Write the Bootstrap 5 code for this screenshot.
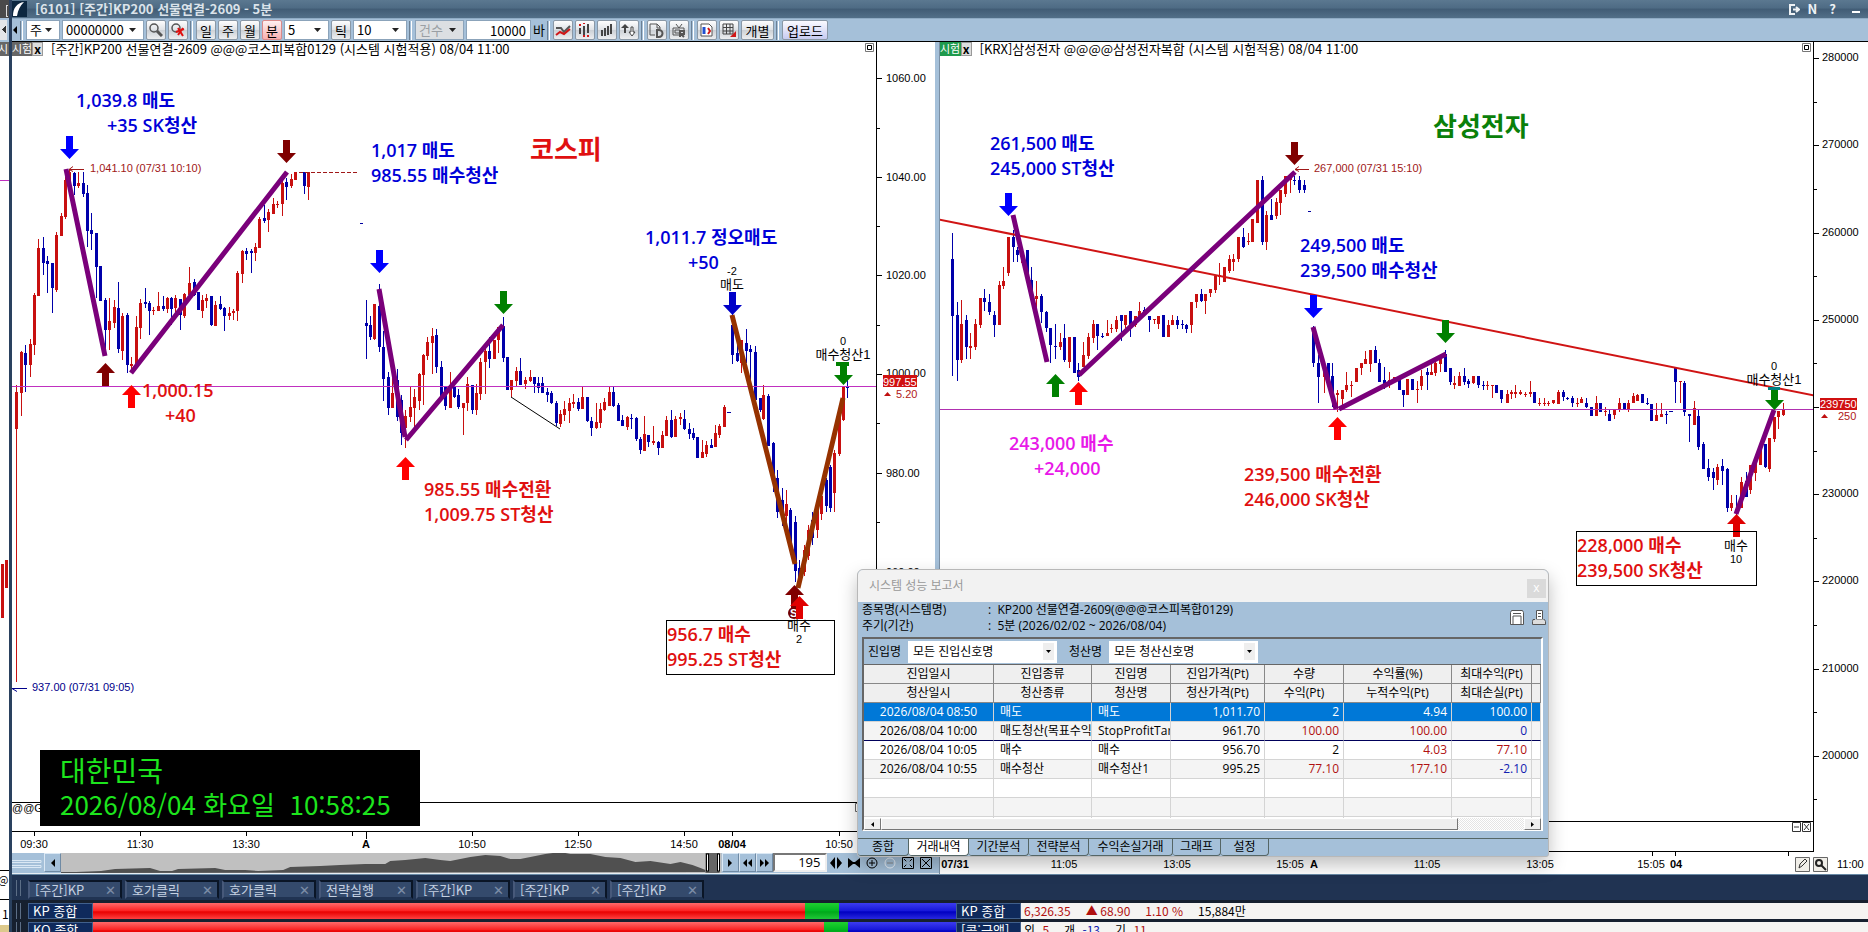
<!DOCTYPE html>
<html lang="ko">
<head>
<meta charset="utf-8">
<meta name="viewport" content="width=device-width, initial-scale=1">
<title>[6101] [주간]KP200 선물연결-2609 - 5분</title>
<link href="https://cdn.jsdelivr.net/npm/bootstrap@5.3.0/dist/css/bootstrap.min.css" rel="stylesheet">
<style>
:root{--pane:#a5c0d9;--ui:"Noto Sans CJK KR",sans-serif;--doc:"Open Sans","Noto Sans CJK KR",sans-serif}
body{font-family:var(--ui);font-size:13px;line-height:16px;color:#000;background:#fff}
button,input,select{font:inherit;color:inherit}
svg{display:block}
.strip{width:12px;border-right:3px solid #2a415f}
.titlebar{height:18px;background:linear-gradient(#5b7890,#4e6b84 45%,#415c75 50%,#526f88)}
.titlebar h1{font-size:13px;line-height:16px;font-weight:700;color:#dbe3ea}
.titlebar button{background:none;border:0;color:#eef2f5;font-weight:700}
.tools{height:24px;background:var(--pane);border-top:1px solid #8fabc4;border-bottom:1px solid #000;gap:2px}
.tools label{line-height:20px}
.rule{width:3px;height:19px;border-left:1px solid #6c8094;border-right:1px solid #fff;margin-right:1px}
.key{height:20px;width:20px;padding:0;border:1px solid #8a98a6;border-radius:2px;background:linear-gradient(#fdfdfd,#dfe2e6 50%,#cdd1d6 52%,#eceef0);line-height:17px;display:inline-flex;align-items:center;justify-content:center}
.key.hot{background:linear-gradient(#fff0f0,#f7b0b0);border-color:#d98a8a}
.key.wider{width:33px}
.key.send{width:46px;background:linear-gradient(#fafaff,#c7cbf0)}
.combo{height:20px;border:1px solid #8ba3ba;border-radius:0;padding:0 16px 0 3px;appearance:none;line-height:18px;background:#fff url("data:image/svg+xml,%3Csvg xmlns='http://www.w3.org/2000/svg' width='7' height='4'%3E%3Cpath d='M0 0h7L3.500 4z' fill='%23222'/%3E%3C/svg%3E") no-repeat right 7px center}
.combo:disabled{background-color:#dcdfe2;color:#9a9fa4;opacity:1}
.pane{min-width:0}
.pane+.pane{border-left:1px solid #7c90a4}
.pricecol{width:59px}
.pricecol.wide{width:55px}
.draw{position:absolute;inset:0;width:100%;height:100%;font-family:"Liberation Sans","Noto Sans CJK KR",sans-serif;font-size:11px}
.ko{font-size:13px}
.head{height:16px;line-height:14px}
.tag{height:14px;line-height:13px;color:#fff;background:#666;font-size:11px;padding:0;width:20px;white-space:nowrap;display:flex;justify-content:center}
.tag.go{background:#1f9a4d;width:21px}
.shut{width:11px;height:14px;padding:0;border:1px solid #999;background:#ddd;line-height:10px;font-weight:700;font-size:12px}
.note{font-family:var(--doc);font-size:18px;font-weight:600}
.name{font-family:var(--doc);font-size:26px;font-weight:700}
.slide{height:21px;background:var(--pane);border-bottom:1px solid #e8eef4}
.slide button{width:17px;height:19px;padding:0;border:1px solid;border-color:#dbe8f4 #6f8aa4 #6f8aa4 #dbe8f4;background:var(--pane);display:flex;align-items:center;justify-content:center}
.slide .bare{border:0;width:18px}
.slide input{width:54px;height:19px;border:2px solid;border-color:#777 #eee #eee #777;font-family:var(--doc);text-align:right;padding:0 4px 2px 0}
.clock{left:40px;top:750px;width:380px;height:76px;background:#000;color:#1de51d;line-height:33px;padding:4px 0 0 20px;white-space:pre}
.clock .big{font-size:28px}.clock .time{font-size:26px}
.foot{height:58px;background:#16202f}
.tabs{height:26px;background:#203352;border-top:1px solid #6889a5;padding:5px 0 0 4px;gap:3px}
.tabs button{width:94px;height:19px;border:2px solid;border-color:#0a1526 #0a1526 #203352 #47597a;background:#344a6c;color:#c5d1e2;padding:0 4px 0 5px;line-height:15px}
.tabs .grip{margin-right:4px}
.grip{width:5px;height:16px;border:1px solid #5c6e86;border-width:0 1px;margin-right:7px}
.tick{height:16px;margin:3px 0 3px 4px}
.tick .cap{width:65px;background:#0f2a5c;border:1px solid #41608c;color:#fff;line-height:14px;padding-left:4px}
.red{background:linear-gradient(#ff6a6a,#fb2020 50%,#e80000 55%,#ff4040)}
.grn{background:linear-gradient(#20d030,#00b820 50%,#00a81a 55%,#20c838)}
.blu{background:linear-gradient(#3c3cf0,#1616d8 50%,#0000c0 55%,#2828e0)}
.vals{background:#f5f4f2;line-height:15px;padding-left:3px;font-size:12px;gap:15px}
.rise{color:#b01010}.fall{color:#1020b0}
.report{left:857px;top:569px;width:692px;height:288px;background:var(--pane);border:1px solid #b8b8b8;border-radius:6px 6px 3px 3px;box-shadow:0 8px 18px rgba(0,0,0,.25);font-family:var(--doc);font-size:12px;overflow:hidden}
.report .bar{height:32px;background:#f2f2f2;color:#999;padding:0 2px 0 11px}
.report .bar button{width:19px;height:19px;border:0;background:#dadada;color:#fff;line-height:14px;padding:0;margin-top:4px}
.info dt{width:126px;font-weight:400}.info dd,.info dt{margin:0;line-height:16px}
.info{padding:0 2px 3px 4px}
.panel{margin:0 5px 0 4px;border:2px solid;border-color:#666 #fff #fff #666;height:194px}
.filter{height:25px;padding-left:4px}
.filter .combo{width:149px;border-color:#fff;height:22px;padding-left:4px;background-image:url("data:image/svg+xml,%3Csvg xmlns='http://www.w3.org/2000/svg' width='11' height='17'%3E%3Cpath fill='%23eee' d='M0 0h11v17H0z'/%3E%3Cpath d='M3 7h5L5.500 10z'/%3E%3C/svg%3E");background-position:right 2px center}
.filter label{width:40px}
.deals{table-layout:fixed;width:100%;margin:0;border-collapse:separate;border-spacing:0}
.deals th,.deals td{height:19px;line-height:18px;padding:0 4px 0 6px;border:0 solid #d4d4d4;border-width:0 1px 1px 0;overflow:hidden;white-space:nowrap}
.deals th{background:#efefef;font-weight:400;text-align:center;border-color:#888;padding:0}
.deals td:nth-child(n+4){text-align:right}
.deals td:first-child{text-align:center;padding:0}
.deals .sel td{background:#0078d7;color:#fff}
.deals .alt td{background:#f4f4f4}
.deals .cut td{border-bottom-color:#00005a}
.grid{height:154px;border-top:1px solid #666;background:#fff}
.hbar{height:12px;background:repeating-conic-gradient(#fff 0 25%,#e4e4e4 0 50%) 0 0/2px 2px}
.hbar button,.hbar i{background:#efefef;border:1px solid;border-color:#fff #777 #777 #fff;padding:0;height:12px;display:flex;align-items:center;justify-content:center}
.hbar button{width:17px}
.sheets{margin-top:7px;border-top:1px solid #566}
.sheets button{height:17px;border:1px solid #566;border-width:0 1px 1px 0;border-radius:0 0 4px 3px;background:var(--pane);padding:0;line-height:14px}
.sheets .on{background:#fff}
</style>
</head>
<body class="vh-100 overflow-hidden">
<div class="d-flex h-100 position-relative">

<aside class="strip h-100 flex-shrink-0 overflow-hidden position-relative">
 <svg width="9" height="932" shape-rendering="crispEdges">
  <rect width="9" height="18" fill="#4a4a4a"/><path d="M8 5H6v11h2" stroke="#ddd" fill="none"/>
  <rect y="18" width="9" height="24" fill="#a5c0d9"/><rect y="20" width="7" height="20" fill="#e4e6e8"/><path d="M6 26v7L2 29.500z" fill="#333"/>
  <rect y="42" width="9" height="14" fill="#666"/><text y="53" x="-2" fill="#fff" font-size="11">시</text>
  <path d="M0 180.500h9" stroke="#c030c0"/><path d="M0 870.500h9M0 899.500h9" stroke="#000"/>
  <rect y="564" x="1" width="3" height="54" fill="#c81010"/><rect y="560" x="5" width="3" height="28" fill="#c81010"/>
  <text x="-2" y="884" font-size="11">@</text><text x="2" y="919" font-size="12">1</text><rect y="925" width="9" height="7" fill="#dcc98c"/>
 </svg>
</aside>

<main class="flex-grow-1 d-flex flex-column h-100" style="min-width:0">
 <header class="titlebar d-flex align-items-center flex-shrink-0">
  <svg width="15" height="16"><rect width="15" height="16" fill="#0c2740"/><path d="M1 15C1 7 5 2 12 1 8 5 6 9 5 15z" fill="#fff"/></svg>
  <h1 class="m-0 ms-2 flex-grow-1">[6101] [주간]KP200 선물연결-2609 - 5분</h1>
  <button class="p-0 me-2" aria-label="내보내기"><svg width="11" height="11" fill="none" stroke="#eef2f5" stroke-width="2"><path d="M6 1H1v9h5M4 5.500h5M7 3l3 2.500L7 8"/></svg></button>
  <button class="p-0 me-2">N</button><button class="p-0 ms-1 me-3">?</button>
  <button class="p-0 me-2" aria-label="최소화"><svg width="8" height="10"><path d="M0 8h8" stroke="#fff" stroke-width="2"/></svg></button>
 </header>

 <div class="tools d-flex align-items-center flex-shrink-0">
  <svg width="6" height="9"><path d="M5 0v8L1 4z"/></svg><span class="rule"></span>
  <select class="combo" aria-label="종류" style="width:34px"><option>주</option></select>
  <select class="combo" aria-label="종목코드" style="width:82px"><option>00000000</option></select>
  <button class="key" aria-label="검색"><svg width="14" height="14" fill="none" stroke="#555"><circle cx="5" cy="5" r="4" stroke-width="1.500"/><path d="M8 8l5 5" stroke-width="3"/></svg></button>
  <button class="key" aria-label="검색 해제"><svg width="14" height="14" fill="none" stroke="#555"><circle cx="5" cy="5" r="4" stroke-width="1.500"/><path d="M5 9l8-3M7 5l5 8M12 5l-5 7" stroke="#e01010" stroke-width="2"/></svg></button>
  <span class="rule"></span>
  <button class="key">일</button><button class="key">주</button><button class="key">월</button><button class="key hot">분</button>
  <select class="combo" aria-label="분" style="width:45px"><option>5</option></select>
  <button class="key">틱</button>
  <select class="combo" aria-label="틱" style="width:54px"><option>10</option></select>
  <span class="rule"></span>
  <select class="combo" aria-label="건수" disabled style="width:49px"><option>건수</option></select>
  <input id="bars" class="combo text-end px-1" style="background:#fff;width:65px" value="10000"><label for="bars">바</label>
  <span class="rule"></span>
  <button class="key" aria-label="추세선"><svg width="16" height="14" fill="none" stroke-width="2"><path d="M1 5h5l3 4 6-6" stroke="#555"/><path d="M1 12l4-3 4 2 6-5" stroke="#d01818"/></svg></button>
  <button class="key" aria-label="봉차트"><svg width="13" height="14"><path d="M2 5v6M6 3v9M10 1v9" stroke="#444" stroke-width="2"/><path d="M1 2h2M5 0h2M5 13h2M9 13h2" stroke="#d01818" stroke-width="2"/></svg></button>
  <button class="key" aria-label="막대"><svg width="13" height="14"><path d="M2 7v6M5 5v8M8 3v9M11 1v10" stroke="#444" stroke-width="2"/></svg></button>
  <button class="key" aria-label="정렬"><svg width="15" height="14"><path d="M4 1l4 4H5v5H3V5H0z" fill="#444"/><path d="M10 4h2v5h2l-3 4-3-4h2z" fill="#fff" stroke="#444"/></svg></button>
  <span class="rule"></span>
  <button class="key" aria-label="문서"><svg width="15" height="15" fill="none" stroke="#555"><path d="M6 12H1V1h7l3 3v2M8 1v4h3"/><path d="M8 7v7h2a3 3 0 0 0 0-7z" stroke-width="2"/></svg></button>
  <button class="key" aria-label="방송"><svg width="14" height="15" fill="none" stroke="#555"><path d="M7 12H1V5h11v2M4 1l3 4 3-4M3 7h5v3H3z"/><path d="M8 14V8h4v3H9l3 3" stroke-width="2"/></svg></button>
  <span class="rule"></span>
  <button class="key" aria-label="차트 저장"><svg width="13" height="14" fill="none" stroke="#555"><path d="M1 1h8l3 3v9H1z" fill="#fff"/><path d="M4 4v7" stroke="#2050d0" stroke-width="3"/><path d="M8 5l2 3-2 3" stroke="#d01818" stroke-width="2"/></svg></button>
  <button class="key" aria-label="표"><svg width="14" height="14"><path d="M1 1h10v10H1zM1 4.500h10M1 8h10M4.500 1v10M8 1v10" fill="none" stroke="#444"/><path d="M14 8v6H8z" fill="#d01818"/></svg></button>
  <button class="key wider">개별</button><span class="rule"></span><button class="key send">업로드</button>
 </div>

 <div class="flex-grow-1 d-flex" style="min-height:0">
  <section class="pane d-flex flex-column" style="flex:927 1 0">
   <div class="flex-grow-1 d-flex">
    <div class="flex-grow-1 position-relative overflow-hidden">
     <svg class="draw"><g transform="translate(-12 -42)">
      <g data-bars="kospi" shape-rendering="crispEdges"></g>
      <path d="M12 386.500h864" stroke="#c030c0"/>
      <path d="M511 397l49 32" stroke="#000"/><path d="M299 172.500h60" stroke="#a01818" stroke-dasharray="4 2"/><path d="M360 223.500h3M727 412.500h4" stroke="#0000a0"/>
      <g stroke="#7a007a" stroke-width="5"><path d="M66 169l39 187M131 373L287 172M379 289l26 148M406 440l97-115"/></g>
      <path d="M732 315l63 249M798 588l45-190" stroke="#963200" stroke-width="5" fill="none"/>
      <path d="M84 169.500H69l4-3m-4 3l4 2" stroke="#a01818" fill="none"/><path d="M27 688.500H12l5 3" stroke="#00008b" fill="none"/>
      <circle cx="794" cy="613" r="6" fill="#700000"/><text x="790" y="617" fill="#fff" font-weight="700">S</text>
      <g data-marks="kospi"></g>
      <use href="#ua" x="799" y="596" fill="#e00000"/><path d="M836 362h13v4h-13z" fill="#008000"/>
      <rect x="666.500" y="620.500" width="168" height="54" fill="none" stroke="#000"/>
      <path d="M12 802.500h864M12 831.500h864M34.500 832v4M140.500 832v4M246.500 832v4M352.500 832v4M366.500 832v7M472.500 832v4M578.500 832v4M684.500 832v4M732.500 832v4M839.500 832v4" stroke="#000"/>
      <g class="note" fill="#0000d8">
       <text x="76" y="107">1,039.8 매도</text><text x="107" y="132">+35 SK청산</text>
       <text x="371" y="157">1,017 매도</text><text x="371" y="182">985.55 매수청산</text>
       <text x="645" y="244">1,011.7 정오매도</text><text x="688" y="269">+50</text></g>
      <g class="note" fill="#e01010">
       <text x="142" y="397">1,000.15</text><text x="165" y="422">+40</text>
       <text x="424" y="496">985.55 매수전환</text><text x="424" y="521">1,009.75 ST청산</text>
       <text x="667" y="641">956.7 매수</text><text x="667" y="666">995.25 ST청산</text></g>
      <text class="name" x="530" y="159" fill="#e01010">코스피</text>
      <text x="90" y="172" fill="#a01818">1,041.10 (07/31 10:10)</text>
      <text x="32" y="691" fill="#00008b">937.00 (07/31 09:05)</text>
      <g text-anchor="middle"><text x="732" y="275">-2</text><text x="843" y="345">0</text><text x="799" y="643">2</text>
       <g class="ko"><text x="732" y="289">매도</text><text x="843" y="359">매수청산1</text><text x="799" y="630">매수</text></g>
       <text x="34" y="848">09:30</text><text x="140" y="848">11:30</text><text x="246" y="848">13:30</text><text x="472" y="848">10:50</text><text x="578" y="848">12:50</text><text x="684" y="848">14:50</text><text x="839" y="848">10:50</text>
       <g font-weight="700"><text x="366" y="848">A</text><text x="732" y="848">08/04</text></g></g>
      <text x="12" y="812">@@G</text><path d="M855.500 803.500h8v8h-8z" fill="none" stroke="#666"/>
      <path d="M865.500 43.500h8v8h-8z" fill="none" stroke="#777"/><path d="M867.500 45.500h4v4h-4z" fill="none" stroke="#000"/>
     </g></svg>
     <div class="head d-flex position-relative"><span class="tag">시험</span><button class="shut">x</button><span class="ms-1 ps-1">[주간]KP200 선물연결-2609 @@@코스피복합0129 (시스템 시험적용) 08/04 11:00</span></div>
    </div>
    <div class="pricecol flex-shrink-0 position-relative"><svg class="draw"><g transform="translate(-876 -42)">
      <path d="M876.500 42v790M877 78.500h5M877 128.500h3M877 177.500h5M877 226.500h3M877 275.500h5M877 325.500h3M877 374.500h5M877 423.500h3M877 473.500h5M877 522.500h3M877 572.500h5" stroke="#000"/>
      <text x="886" y="82">1060.00</text><text x="886" y="181">1040.00</text><text x="886" y="279">1020.00</text><text x="886" y="377">1000.00</text><text x="886" y="477">980.00</text><text x="886" y="576">960.00</text>
      <rect x="883" y="375" width="34" height="12" fill="#d01010"/><text x="883" y="386" fill="#fff">997.55</text><path d="M884 396h7l-3.500-4z" fill="#c01010"/><text x="896" y="398" fill="#b01818">5.20</text>
     </g></svg></div>
    <div style="width:4px;background:var(--pane)" class="flex-shrink-0"></div>
   </div>
   <div class="slide d-flex flex-shrink-0">
    <svg width="32" height="20"><path d="M0 7.500h29v2H0M0 12.500h29v2H0" fill="none" stroke="#dbe8f4"/></svg>
    <button aria-label="이전"><svg width="5" height="8"><path d="M5 0v8L1 4z"/></svg></button>
    <svg class="flex-grow-1" height="20" width="10" viewBox="61 853 660 20" preserveAspectRatio="none" style="min-width:0"><path fill="#c0c0c0" d="M61 853h660v20H61z"/><path fill="#505050" d="M61 873v-1h15l25-1 14-2 35-1 10 3h12l6-2 37-1 10 2h20l13 1 25-1 7-3 30-1 20-1 25-1h20l5-3 15-1 10-1 10-1 15 2 10 1 20-4 15-2 15 1 10 3h10l15-3 10-2 15-2 10 2h20l15 3 15 1 15 4 15-1 20 3 10-2 12 3 8 3 5 2v2z"/><path fill="#666" d="M705 853h14v20h-14z"/><path d="M706 854h2v17h-2zM717 854h2v17h-2z" fill="#fff" stroke="#000"/></svg>
    <button aria-label="다음"><svg width="5" height="8"><path d="M0 0v8l4-4z"/></svg></button>
    <button aria-label="빠르게 뒤로"><svg width="9" height="8"><path d="M4 0v8L0 4zM9 0v8L5 4z"/></svg></button>
    <button aria-label="빠르게 앞으로"><svg width="9" height="8"><path d="M0 0v8l4-4zM5 0v8l4-4z"/></svg></button>
    <input aria-label="봉 개수" value="195">
    <button class="bare" aria-label="넓게"><svg width="12" height="12"><path d="M5 0v12L0 6zM7 0v12l5-6z"/></svg></button>
    <button class="bare" aria-label="좁게"><svg width="12" height="12"><path d="M0 1v10l5-4V5zM12 1v10L7 7V5zM5 5h2v2H5z"/></svg></button>
    <button class="bare" aria-label="확대"><svg width="12" height="12" fill="none" stroke="#000"><circle cx="6" cy="6" r="5"/><path d="M3 6h6M6 3v6"/></svg></button>
    <button class="bare" aria-label="축소"><svg width="12" height="12" fill="none" stroke="#e8f0f8"><circle cx="6" cy="6" r="5"/><path d="M3 6h6" stroke="#888"/></svg></button>
    <button class="bare" aria-label="전체"><svg width="12" height="12" fill="none" stroke="#000"><path d="M.5.5h11v11H.5zM2 2l8 8M10 2l-8 8"/><path d="M4 6h4M6 4v4" stroke="#a5c0d9" stroke-width="3"/></svg></button>
    <button class="bare" aria-label="닫기"><svg width="12" height="12" fill="none" stroke="#000"><path d="M.5.5h11v11H.5zM2 2l8 8M10 2l-8 8"/></svg></button>
    <span style="width:4px"></span>
   </div>
  </section>

  <section class="pane d-flex" style="flex:929 1 0">
   <div class="flex-grow-1 position-relative overflow-hidden">
    <svg class="draw"><g transform="translate(-940 -42)">
     <g data-bars="samsung" shape-rendering="crispEdges"></g>
     <path d="M939 409.500h875" stroke="#b030b0"/><path d="M939 219.500l875 176" stroke="#d01414" stroke-width="2"/><path d="M1308 211.500h3M1669 411.500h4" stroke="#0000a0"/>
     <path d="M1013 215l34 147M1079 375l216-203M1313 327l23 82M1339 409l107-55M1736 514l38-104" stroke="#7a007a" stroke-width="5"/>
     <path d="M1309 169.500h-14l4-3m-4 3l4 2" stroke="#a01818" fill="none"/>
     <g data-marks="samsung"></g><path d="M1768 387h12v3h-12z" fill="#008080"/>
     <rect x="1576.500" y="531.500" width="180" height="54" fill="none" stroke="#000"/>
     <path d="M939 821.500h875M939 851.500h875M1652.500 852v4M1675.500 852v4M1788.500 852v4" stroke="#000"/>
     <path d="M1792.500 822.500h8v9h-8zM1802.500 822.500h8v9h-8zM1794 827h5M1804 824l5 6M1809 824l-5 6" fill="none" stroke="#333"/>
     <g class="note" fill="#0000d8"><text x="990" y="150">261,500 매도</text><text x="990" y="175">245,000 ST청산</text><text x="1300" y="252">249,500 매도</text><text x="1300" y="277">239,500 매수청산</text></g>
     <g class="note" fill="#e818e8"><text x="1009" y="450">243,000 매수</text><text x="1034" y="475">+24,000</text></g>
     <g class="note" fill="#e01010"><text x="1244" y="481">239,500 매수전환</text><text x="1244" y="506">246,000 SK청산</text><text x="1577" y="552">228,000 매수</text><text x="1577" y="577">239,500 SK청산</text></g>
     <text class="name" x="1433" y="136" fill="#0a800a">삼성전자</text>
     <text x="1314" y="172" fill="#a01818">267,000 (07/31 15:10)</text>
     <g text-anchor="middle"><text x="1774" y="370">0</text><text x="1736" y="563">10</text><g class="ko"><text x="1774" y="384">매수청산1</text><text x="1736" y="550">매수</text></g>
      <text x="1064" y="868">11:05</text><text x="1177" y="868">13:05</text><text x="1290" y="868">15:05</text><text x="1427" y="868">11:05</text><text x="1540" y="868">13:05</text><text x="1651" y="868">15:05</text>
      <g font-weight="700"><text x="955" y="868">07/31</text><text x="1314" y="868">A</text><text x="1676" y="868">04</text></g></g>
     <path d="M1802.500 43.500h8v8h-8z" fill="none" stroke="#777"/><path d="M1804.500 45.500h4v4h-4z" fill="none" stroke="#000"/>
     <path d="M1795.500 857.500h14v14h-14z" fill="#f0eee8" stroke="#666"/><path d="M1799 868l1-4 5-5 2 2-5 5z" fill="none" stroke="#333"/>
    </g></svg>
    <div class="head d-flex position-relative"><span class="tag go">시험</span><button class="shut">x</button><span class="ms-1 ps-1">[KRX]삼성전자 @@@@삼성전자복합 (시스템 시험적용) 08/04 11:00</span></div>
   </div>
   <div class="pricecol wide flex-shrink-0 position-relative"><svg class="draw"><g transform="translate(-1813 -42)">
     <path d="M1813.500 42v810M1814 58.500h5M1814 102.500h3M1814 145.500h5M1814 189.500h3M1814 233.500h5M1814 276.500h3M1814 320.500h5M1814 363.500h3M1814 407.500h5M1814 451.500h3M1814 494.500h5M1814 538.500h3M1814 581.500h5M1814 625.500h3M1814 669.500h5M1814 712.500h3M1814 756.500h5M1814 799.500h3" stroke="#000"/>
     <text x="1822" y="61">280000</text><text x="1822" y="148">270000</text><text x="1822" y="236">260000</text><text x="1822" y="323">250000</text><text x="1822" y="497">230000</text><text x="1822" y="584">220000</text><text x="1822" y="672">210000</text><text x="1822" y="759">200000</text>
     <rect x="1820" y="398" width="37" height="12" fill="#d01010"/><text x="1820" y="408" fill="#fff">239750</text><path d="M1821 418h7l-3.500-4z" fill="#c01010"/><text x="1838" y="420" fill="#b01818">250</text>
     <path d="M1813.500 857.500h14v14h-14z" fill="#f0eee8" stroke="#666"/><circle cx="1819" cy="863" r="3" fill="none" stroke="#222" stroke-width="2"/><path d="M1821 865l5 5" stroke="#222" stroke-width="2"/><text x="1837" y="868">11:00</text>
    </g></svg></div>
  </section>
 </div>

 <footer class="foot flex-shrink-0 overflow-hidden">
  <nav class="tabs d-flex" id="tabs"><span class="grip"></span></nav>
  <div class="tick d-flex"><span class="grip"></span><span class="cap">KP 종합</span>
   <div class="d-flex" style="flex:864 1 0"><span class="red" style="flex:713"></span><span class="grn" style="flex:34"></span><span class="blu" style="flex:117"></span></div>
   <span class="cap">KP 종합</span><div class="vals rise d-flex" style="flex:845 1 0"><span>6,326.35</span><span>▲ 68.90</span><span>1.10 %</span><span class="text-black">15,884만</span></div></div>
  <div class="tick d-flex"><span class="grip"></span><span class="cap">KQ 종합</span>
   <div class="d-flex" style="flex:864 1 0"><span class="red" style="flex:732"></span><span class="grn" style="flex:24"></span><span class="blu" style="flex:108"></span></div>
   <span class="cap">[콜:금액]</span><div class="vals d-flex" style="flex:845 1 0"><span>외 <b class="rise fw-normal ps-1">5</b></span><span>개 <b class="fall fw-normal ps-1">-13</b></span><span>기 <b class="rise fw-normal ps-1">11</b></span></div></div>
 </footer>
</main>

<div class="clock position-absolute"><div class="big">대한민국</div><div class="time">2026/08/04 화요일  10:58:25</div></div>

<section class="report position-absolute">
 <div class="bar d-flex justify-content-between align-items-center"><span>시스템 성능 보고서</span><button aria-label="보고서 닫기">x</button></div>
 <div class="info d-flex justify-content-between">
  <dl class="m-0"><div class="d-flex"><dt>종목명(시스템명)</dt><dd>:&nbsp; KP200 선물연결-2609(@@@코스피복합0129)</dd></div><div class="d-flex"><dt>주기(기간)</dt><dd>:&nbsp; 5분 (2026/02/02 ~ 2026/08/04)</dd></div></dl>
  <div class="d-flex gap-2 pt-2"><svg width="14" height="15"><path d="M1.500.5h11l1 2v12h-13v-12z" fill="#fff" stroke="#555"/><path d="M3 3.500h8M3 14V6h8v8" stroke="#555" fill="none"/></svg><svg width="14" height="15"><path d="M4.500.5h6v9h-6z" fill="#fff" stroke="#555"/><path d="M6 3.500h3M6 6.500h3" stroke="#555"/><path d="M3 9.500H1l-.5 2v3h13v-3l-1-2h-1" fill="#ddd" stroke="#555"/></svg></div>
 </div>
 <div class="panel">
  <div class="filter d-flex align-items-center"><label for="inSig">진입명</label><select id="inSig" class="combo"><option>모든 진입신호명</option></select><label for="outSig" class="ms-2 ps-1 me-1">청산명</label><select id="outSig" class="combo"><option>모든 청산신호명</option></select></div>
  <div class="grid overflow-hidden">
   <table class="deals"><colgroup><col style="width:130px"><col style="width:98px"><col style="width:79px"><col style="width:94px"><col style="width:79px"><col style="width:108px"><col style="width:80px"><col></colgroup>
    <thead><tr><th>진입일시</th><th>진입종류</th><th>진입명</th><th>진입가격(Pt)</th><th>수량</th><th>수익률(%)</th><th>최대수익(Pt)</th><th></th></tr><tr><th>청산일시</th><th>청산종류</th><th>청산명</th><th>청산가격(Pt)</th><th>수익(Pt)</th><th>누적수익(Pt)</th><th>최대손실(Pt)</th><th></th></tr></thead>
    <tbody>
     <tr class="sel"><td>2026/08/04 08:50</td><td>매도</td><td>매도</td><td>1,011.70</td><td>2</td><td>4.94</td><td>100.00</td><td></td></tr>
     <tr class="alt cut"><td>2026/08/04 10:00</td><td>매도청산(목표수익)</td><td>StopProfitTarget</td><td>961.70</td><td class="rise">100.00</td><td class="rise">100.00</td><td class="fall">0</td><td></td></tr>
     <tr><td>2026/08/04 10:05</td><td>매수</td><td>매수</td><td>956.70</td><td>2</td><td class="rise">4.03</td><td class="rise">77.10</td><td></td></tr>
     <tr class="alt"><td>2026/08/04 10:55</td><td>매수청산</td><td>매수청산1</td><td>995.25</td><td class="rise">77.10</td><td class="rise">177.10</td><td class="fall">-2.10</td><td></td></tr>
     <tr><td></td><td></td><td></td><td></td><td></td><td></td><td></td><td></td></tr><tr class="alt"><td></td><td></td><td></td><td></td><td></td><td></td><td></td><td></td></tr><tr><td></td><td></td><td></td><td></td><td></td><td></td><td></td><td></td></tr>
    </tbody></table>
  </div>
  <div class="hbar d-flex"><button aria-label="왼쪽으로"><svg width="4" height="5"><path d="M3 0v5L0 2.500z"/></svg></button><i style="width:577px"></i><button class="ms-auto" aria-label="오른쪽으로"><svg width="4" height="5"><path d="M0 0v5l3-2.500z"/></svg></button></div>
 </div>
 <div class="sheets d-flex"><button style="width:51px">종합</button><button class="on" style="width:60px">거래내역</button><button style="width:60px">기간분석</button><button style="width:60px">전략분석</button><button style="width:84px">수익손실거래</button><button style="width:48px">그래프</button><button style="width:48px">설정</button></div>
</section>
</div>

<svg width="0" height="0" class="position-absolute"><defs>
 <path id="da" d="M-3 0h7v13h6L.500 23-9 13h6z"/><path id="ua" d="M.500 0L10 10H4v13h-7V10h-6z"/>
</defs></svg>

<script src="https://cdn.jsdelivr.net/npm/bootstrap@5.3.0/dist/js/bootstrap.bundle.min.js"></script>
<script>
// Each bar: x, high, body top, body bottom, low, r(ise) or f(all)
const bars = {
kospi: `16,385,392,429,682,r 21,351,352,393,416,r 25,345,353,365,392,f 30,339,344,365,377,r 34,293,295,345,355,r 38,239,248,296,296,r 43,237,248,263,275,f 47,256,261,264,293,f 52,263,263,288,313,f 56,232,235,290,292,r 61,213,216,236,236,r 65,177,180,217,219,r 69,169,172,183,187,r 74,172,173,186,195,f 78,172,183,186,188,r 83,172,183,194,197,f 87,185,193,231,247,f 91,213,230,234,250,f 96,233,233,267,298,f 100,266,266,301,301,f 105,298,300,330,355,f 109,298,321,330,350,r 114,300,307,323,328,r 118,282,308,349,353,f 122,313,316,351,360,r 127,313,315,365,373,f 131,357,364,366,373,r 136,316,327,365,365,r 140,299,303,328,339,r 145,288,302,304,308,f 149,301,303,311,335,f 153,307,310,311,315,r 158,292,306,311,311,r 163,296,306,309,311,f 167,297,298,309,313,r 171,297,298,309,325,f 175,295,298,308,312,r 180,299,299,315,330,f 184,293,294,316,318,r 189,267,283,295,295,r 194,279,282,295,296,f 198,292,292,310,310,f 202,295,300,311,318,r 206,294,298,301,308,r 211,296,296,325,326,f 215,301,305,326,326,r 220,296,304,309,310,f 224,307,308,316,331,f 229,307,313,316,320,r 233,309,311,313,320,r 237,271,273,311,321,r 242,250,251,274,283,r 246,248,251,254,260,f 251,249,251,253,273,f 255,243,247,253,261,r 259,217,219,248,248,r 264,205,218,221,223,f 268,209,212,220,232,r 273,198,204,214,214,r 277,201,204,205,208,r 282,180,183,204,216,r 286,178,182,187,200,f 291,174,179,186,188,r 295,172,172,180,180,r 304,172,172,186,194,f 308,172,172,187,200,r
366,300,323,326,359,f 370,316,325,337,340,f 374,304,304,339,340,r 379,284,306,347,352,f 383,331,347,379,401,f 388,372,377,408,415,f 392,373,393,408,408,r 397,369,380,417,421,f 401,395,400,433,445,f 405,410,416,428,448,r 410,387,407,417,422,r 414,389,397,408,431,r 419,373,374,401,410,r 423,354,355,375,405,r 427,337,342,356,360,r 432,328,336,343,374,r 436,329,335,367,373,f 441,361,367,397,397,f 445,387,387,406,410,f 450,372,385,408,408,r 454,387,387,397,398,f 458,389,395,407,409,f 463,403,403,408,435,r 467,377,384,403,411,r 472,385,385,410,414,f 476,384,393,410,415,r 480,358,362,394,400,r 485,343,351,362,394,r 489,337,351,359,368,f 494,340,340,359,359,r 498,327,327,340,353,r 503,317,326,358,362,f 507,357,357,390,390,f 511,380,380,390,397,r 516,367,371,381,387,r 520,358,371,385,385,f 525,377,380,384,389,r 530,370,377,381,382,r 534,377,377,384,393,f 538,377,383,388,393,f 542,377,383,393,393,f 547,388,392,395,402,f 551,391,393,403,404,f 556,401,403,423,426,f 560,410,414,424,427,r 564,401,409,415,421,r 569,398,403,411,423,r 573,394,402,404,408,r 578,398,402,409,411,f 582,387,397,409,409,r 587,397,397,421,422,f 591,417,421,428,436,f 596,403,422,428,429,r 600,403,409,423,428,r 604,398,402,410,411,r 609,387,392,406,406,r 613,387,392,406,407,f 618,403,405,421,421,f 622,415,420,426,426,f 627,416,417,427,430,r 631,414,418,419,429,f 636,417,418,439,441,f 640,437,439,450,454,f 644,416,434,451,451,r 648,435,435,442,447,f 653,426,441,443,445,r 658,441,442,448,455,f 662,431,435,448,448,r 666,416,420,436,436,r 671,410,420,437,438,f 675,416,419,437,437,r 680,413,417,419,425,r 684,410,419,429,430,f 689,423,429,434,439,f 693,428,433,438,440,f 697,437,437,458,458,f 702,440,452,458,458,r 706,441,445,454,457,r 711,439,445,448,448,f 715,425,433,447,447,r 719,424,426,435,438,r 724,405,407,427,427,r
732,313,325,355,364,f 737,340,353,361,362,f 741,340,340,363,373,r 746,329,343,351,363,f 750,345,349,352,380,f 755,346,352,400,400,f 760,398,398,410,412,f 763,385,395,419,420,r 768,394,396,446,446,f 773,442,443,483,492,f 777,470,478,512,518,f 782,488,500,514,526,f 786,490,504,516,530,r 790,508,510,545,552,f 795,516,522,571,582,f 799,560,568,577,580,f 804,545,550,572,576,r 808,525,530,556,560,r 812,512,520,538,545,f 817,500,506,530,538,r 821,482,496,514,520,r 826,478,480,506,512,f 830,465,467,508,512,f 834,450,453,493,512,r 839,415,417,454,456,r 843,386,387,420,421,r 847,380,386,388,398,f`,
samsung: `952,233,259,316,376,f 957,302,315,360,381,f 961,300,324,360,363,r 966,315,320,347,359,f 970,333,346,348,359,r 975,319,324,347,350,r 980,298,298,325,328,r 984,289,298,302,311,f 989,294,302,312,315,f 994,311,315,325,337,f 999,281,285,325,325,r 1003,267,281,286,289,r 1008,237,237,273,276,r 1013,230,237,247,262,f 1017,247,250,255,262,f 1022,252,254,263,263,r 1027,250,250,280,280,f 1031,267,280,298,298,f 1036,281,296,299,317,r 1041,294,296,312,323,f 1046,311,312,328,332,f 1050,328,328,345,363,f 1055,324,346,347,359,f 1060,333,342,347,350,r 1064,324,338,360,362,f 1069,337,337,362,368,r 1074,337,337,373,373,f 1078,363,370,377,381,f 1083,342,355,367,367,r 1088,333,337,356,359,r 1093,320,324,338,343,r 1097,324,324,336,350,f 1102,333,336,337,338,f 1107,320,333,336,336,r 1111,324,328,329,333,r 1116,316,320,329,332,r 1121,315,315,321,341,f 1125,315,315,325,328,r 1130,311,311,327,337,f 1135,316,316,325,327,r 1139,302,311,316,320,r 1144,307,310,315,315,f 1149,316,316,320,332,f 1154,319,319,320,324,r 1158,316,316,324,329,r 1163,315,315,337,337,f 1168,320,325,337,337,r 1172,315,320,325,325,r 1177,316,320,325,329,f 1182,320,324,325,329,f 1186,324,325,329,333,f 1191,302,302,325,333,r 1196,294,294,302,308,r 1201,289,294,301,302,f 1205,294,294,301,314,r 1210,289,289,293,297,r 1215,276,276,290,293,r 1219,263,275,277,285,r 1224,267,267,282,282,r 1229,255,259,271,273,r 1233,254,259,262,271,r 1238,237,237,259,262,r 1243,228,237,247,248,f 1248,233,241,242,245,r 1252,219,219,242,242,r 1257,180,180,223,223,r 1262,176,180,242,245,f 1266,211,215,242,250,r 1271,199,215,220,220,f 1276,198,202,216,219,r 1280,190,190,203,215,r 1285,176,176,194,197,r 1290,177,177,180,193,r 1294,176,180,181,185,f 1299,176,180,190,193,f 1304,180,185,190,193,f
1313,326,330,363,367,f 1318,355,363,377,403,f 1324,367,372,377,393,r 1328,363,363,380,380,f 1332,363,376,400,407,f 1337,390,393,395,412,r 1342,390,390,399,407,r 1346,372,385,390,392,r 1351,381,385,386,397,r 1356,368,368,382,382,r 1361,363,363,368,375,r 1365,351,359,364,364,r 1370,350,350,364,372,r 1375,346,350,363,363,f 1379,359,363,382,382,f 1384,367,380,385,389,f 1389,372,380,382,388,r 1394,377,377,382,382,r 1399,377,377,390,390,f 1403,390,390,395,407,f 1407,379,379,395,395,r 1412,379,379,390,390,f 1417,381,389,390,403,r 1421,370,376,386,390,r 1427,368,372,375,390,f 1431,363,372,375,375,r 1435,360,363,373,376,r 1440,355,358,364,372,r 1445,350,354,372,372,f 1450,368,368,382,385,f 1454,376,383,385,389,r 1459,372,376,386,386,r 1464,368,376,382,385,f 1468,379,381,384,388,f 1473,376,376,383,384,r 1478,376,376,385,388,f 1483,381,385,386,390,f 1487,381,385,386,390,r 1492,385,385,386,398,r 1496,385,385,393,393,f 1501,390,390,399,403,f 1507,390,394,403,403,r 1511,390,392,394,399,r 1515,385,392,394,398,r 1520,390,392,394,395,r 1525,392,394,395,397,r 1530,381,392,394,397,r 1534,392,392,403,403,f 1539,398,403,404,406,r 1544,398,403,404,406,r 1548,401,403,404,406,r 1553,400,400,403,404,r 1558,390,392,404,404,r 1563,390,392,397,401,f 1567,397,398,399,400,f 1572,396,398,403,407,f 1577,398,403,404,407,r 1581,397,399,403,403,r 1586,398,403,407,408,f 1591,407,407,416,416,f 1596,396,403,416,416,r 1600,403,403,412,412,f 1605,407,411,412,416,r 1609,410,414,421,421,f 1614,410,410,415,419,r 1619,398,403,409,412,r 1624,403,403,410,410,f 1628,400,403,410,412,r 1633,393,396,403,403,r 1637,394,395,401,401,r 1642,394,394,403,403,f 1647,398,403,404,405,f 1651,404,404,421,421,f 1656,403,415,421,421,r 1661,403,414,417,417,r 1666,411,414,415,424,f
1675,368,368,382,403,f 1680,381,381,382,403,r 1684,381,383,412,416,f 1689,414,414,416,442,f 1694,401,408,425,425,r 1698,410,416,447,450,f 1703,442,444,469,469,f 1708,459,468,477,481,f 1713,468,472,478,490,f 1717,464,467,480,485,r 1722,459,466,471,485,f 1727,468,469,508,512,f 1731,495,503,508,511,r 1736,495,509,513,515,f 1741,477,482,508,508,r 1746,472,481,497,497,f 1750,465,465,490,494,r 1755,463,463,473,481,r 1760,450,450,465,465,r 1765,444,444,467,468,f 1769,438,438,469,472,r 1774,417,417,439,442,r 1778,411,411,417,429,r 1783,403,410,415,416,r`};
for (const [name, rows] of Object.entries(bars)) {
  document.querySelector(`[data-bars=${name}]`).innerHTML = rows.trim().split(/\s+/).map(row => {
    const [x, h, t, b, l, c] = row.split(',');
    return `<path fill="${c === 'r' ? '#c81010' : '#0000aa'}" d="M${x} ${h}h1V${l}h-1zM${x - 1} ${t}h3V${b}h-3z"/>`;
  }).join('');
}
// Entry and exit arrows: direction, x, top, colour
const marks = {
kospi: [['da',69,136,'#00f'],['da',286,140,'#800000'],['da',379,250,'#00f'],['da',503,291,'#008000'],['da',732,292,'#0000c8'],['da',843,362,'#008000'],['ua',105,363,'#800000'],['ua',131,385,'#f00'],['ua',405,457,'#f00'],['ua',794,585,'#800000']],
samsung: [['da',1008,193,'#00f'],['da',1294,142,'#800000'],['da',1313,295,'#00f'],['da',1445,320,'#008000'],['da',1774,387,'#008000'],['ua',1055,374,'#008000'],['ua',1078,382,'#f00'],['ua',1337,417,'#f00'],['ua',1736,514,'#e00000']]};
for (const [name, list] of Object.entries(marks)) {
  document.querySelector(`[data-marks=${name}]`).innerHTML = list.map(([d, x, y, c]) => `<use href="#${d}" x="${x}" y="${y}" fill="${c}"/>`).join('');
}
document.getElementById('tabs').insertAdjacentHTML('beforeend', ['[주간]KP','호가클릭','호가클릭','전략실행','[주간]KP','[주간]KP','[주간]KP']
  .map(t => `<button class="d-flex justify-content-between"><span>${t}</span><span class="opacity-50">✕</span></button>`).join(''));
</script>
</body>
</html>
